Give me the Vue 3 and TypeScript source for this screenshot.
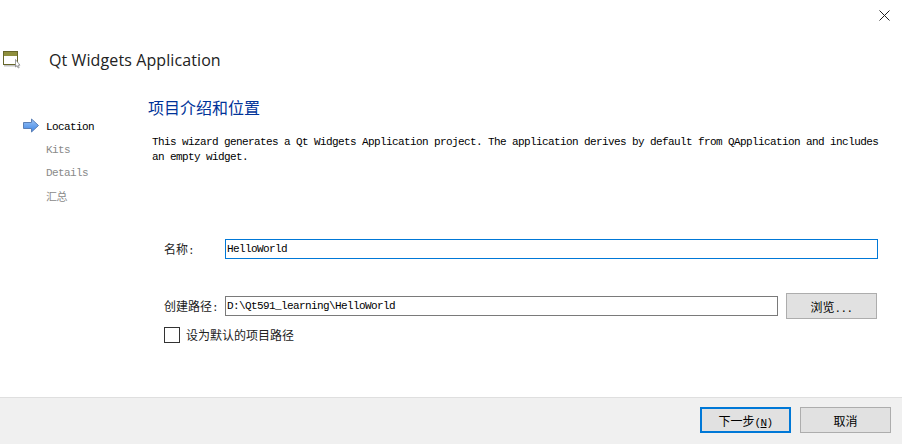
<script setup lang="ts">
const steps = [
  { label: 'Location', active: true },
  { label: 'Kits', active: false },
  { label: 'Details', active: false },
  { label: '汇总', active: false },
]
</script>

<template>
  <div class="wizard">
    <div class="close-row">
      <svg class="close" width="11" height="11" viewBox="0 0 11 11">
        <path d="M0.5 0.5L10.5 10.5M10.5 0.5L0.5 10.5" stroke="#222" stroke-width="1" fill="none" />
      </svg>
    </div>
    <header class="head">
      <svg class="app-icon" width="21" height="18" viewBox="0 0 21 18">
        <rect x="3.5" y="0.5" width="14" height="13" fill="#fff" stroke="#66662a" />
        <rect x="4" y="1" width="13" height="4" fill="#8f8f3c" />
        <rect x="4" y="14" width="14" height="1.5" fill="#c4c4c4" />
        <path d="M15.5 8.5V16L17 14.6L18.2 17L19.2 16.5L18 14.2H20Z" fill="#fff" stroke="#777" stroke-width="0.7" />
      </svg>
      <h1 class="app-title">Qt Widgets Application</h1>
    </header>
    <div class="body">
      <nav class="steps">
        <div v-for="s in steps" :key="s.label" class="step" :class="{ active: s.active }">
          <svg v-if="s.active" class="arrow" width="16" height="15" viewBox="0 0 16 15">
            <defs>
              <linearGradient id="arrowFill" x1="0" y1="0" x2="0" y2="1">
                <stop offset="0" stop-color="#9cc4f5" />
                <stop offset="1" stop-color="#3f86e6" />
              </linearGradient>
            </defs>
            <path d="M0.5 4.5H8.5V1L15.5 7.5L8.5 14V10.5H0.5Z" fill="url(#arrowFill)" stroke="#5b7fb5" stroke-width="1" />
          </svg>
          <span>{{ s.label }}</span>
        </div>
      </nav>
      <main class="content">
        <h2 class="page-title">项目介绍和位置</h2>
        <p class="desc">This wizard generates a Qt Widgets Application project. The application derives by default from QApplication and includes an empty widget.</p>
        <div class="form">
          <div class="row name-row">
            <label class="lbl">名称<span class="asc">:</span></label>
            <div class="input focus">HelloWorld</div>
          </div>
          <div class="row path-row">
            <label class="lbl">创建路径<span class="asc">:</span></label>
            <div class="input">D:\Qt591_learning\HelloWorld</div>
            <button class="btn browse">浏览<span class="asc">...</span></button>
          </div>
          <div class="check-row">
            <span class="box"></span>
            <span class="check-label">设为默认的项目路径</span>
          </div>
        </div>
      </main>
    </div>
    <footer class="foot">
      <button class="btn primary">下一步<span class="asc">(<u>N</u>)</span></button>
      <button class="btn">取消</button>
    </footer>
  </div>
</template>

<style>
html, body { margin: 0; background: #fff; }
</style>

<style scoped>
.wizard {
  width: 902px;
  height: 444px;
  display: flex;
  flex-direction: column;
  background: #fff;
  overflow: hidden;
  font-family: "Liberation Mono", "Noto Sans CJK SC", monospace;
  color: #000;
}
.close-row {
  height: 45px;
  display: flex;
  justify-content: flex-end;
  align-items: flex-start;
  padding: 10px 12px 0 0;
  box-sizing: border-box;
}
.head {
  height: 30px;
  display: flex;
  align-items: center;
}
.app-icon { margin-top: 0; }
.app-title {
  margin: 0 0 0 28px;
  font: 400 16px "Open Sans", sans-serif;
  letter-spacing: 0.1px;
  color: #222;
}
.body {
  flex: 1;
  display: flex;
  min-height: 0;
  padding-top: 20px;
}
.steps {
  width: 148px;
  padding: 20px 0 0 23px;
  box-sizing: border-box;
}
.step {
  height: 23px;
  display: flex;
  align-items: center;
  padding-left: 23px;
  font-size: 11px;
  letter-spacing: -0.6px;
  color: #8a8a8a;
  position: relative;
}
.step.active { color: #000; }
.arrow { position: absolute; left: 0; top: 3px; }
.content {
  flex: 1;
  min-width: 0;
}
.page-title {
  margin: 0;
  font: 400 16px/25px "Noto Sans CJK SC", sans-serif;
  color: #003399;
}
.desc {
  margin: 15px 20px 0 4px;
  font-size: 11px;
  letter-spacing: -0.6px;
  line-height: 15px;
  height: 30px;
}
.form {
  padding: 0 24px 0 16px;
}
.row {
  display: flex;
  align-items: center;
}
.name-row { margin-top: 74px; }
.path-row { margin-top: 34px; }
.lbl {
  width: 61px;
  flex: none;
  font: 12px "Noto Sans CJK SC", sans-serif;
  color: #222;
  position: relative;
  top: -1px;
}
.asc {
  font-family: "Liberation Mono", monospace;
  font-size: 11px;
  letter-spacing: -0.6px;
}
.input {
  flex: 1;
  height: 20px;
  box-sizing: border-box;
  border: 1px solid #7a7a7a;
  padding-left: 1px;
  font-size: 11px;
  letter-spacing: -0.6px;
  line-height: 18px;
  white-space: nowrap;
}
.input.focus { border-color: #0078d7; }
.btn {
  width: 91px;
  height: 26px;
  box-sizing: border-box;
  border: 1px solid #adadad;
  background: #e1e1e1;
  padding: 0;
  font: 12px "Noto Sans CJK SC", sans-serif;
  color: #000;
}
.browse { margin: 0 1px 0 8px; flex: none; }
.check-row {
  margin-top: 7px;
  display: flex;
  align-items: center;
}
.box {
  width: 16px;
  height: 16px;
  box-sizing: border-box;
  border: 1px solid #333;
}
.check-label {
  margin-left: 6px;
  font: 12px "Noto Sans CJK SC", sans-serif;
  color: #222;
}
.foot {
  height: 47px;
  box-sizing: border-box;
  border-top: 1px solid #dfdfdf;
  background: #f0f0f0;
  display: flex;
  justify-content: flex-end;
  align-items: flex-start;
  gap: 9px;
  padding: 9px 11px 0 0;
}
.primary { border: 2px solid #0078d7; }
</style>
